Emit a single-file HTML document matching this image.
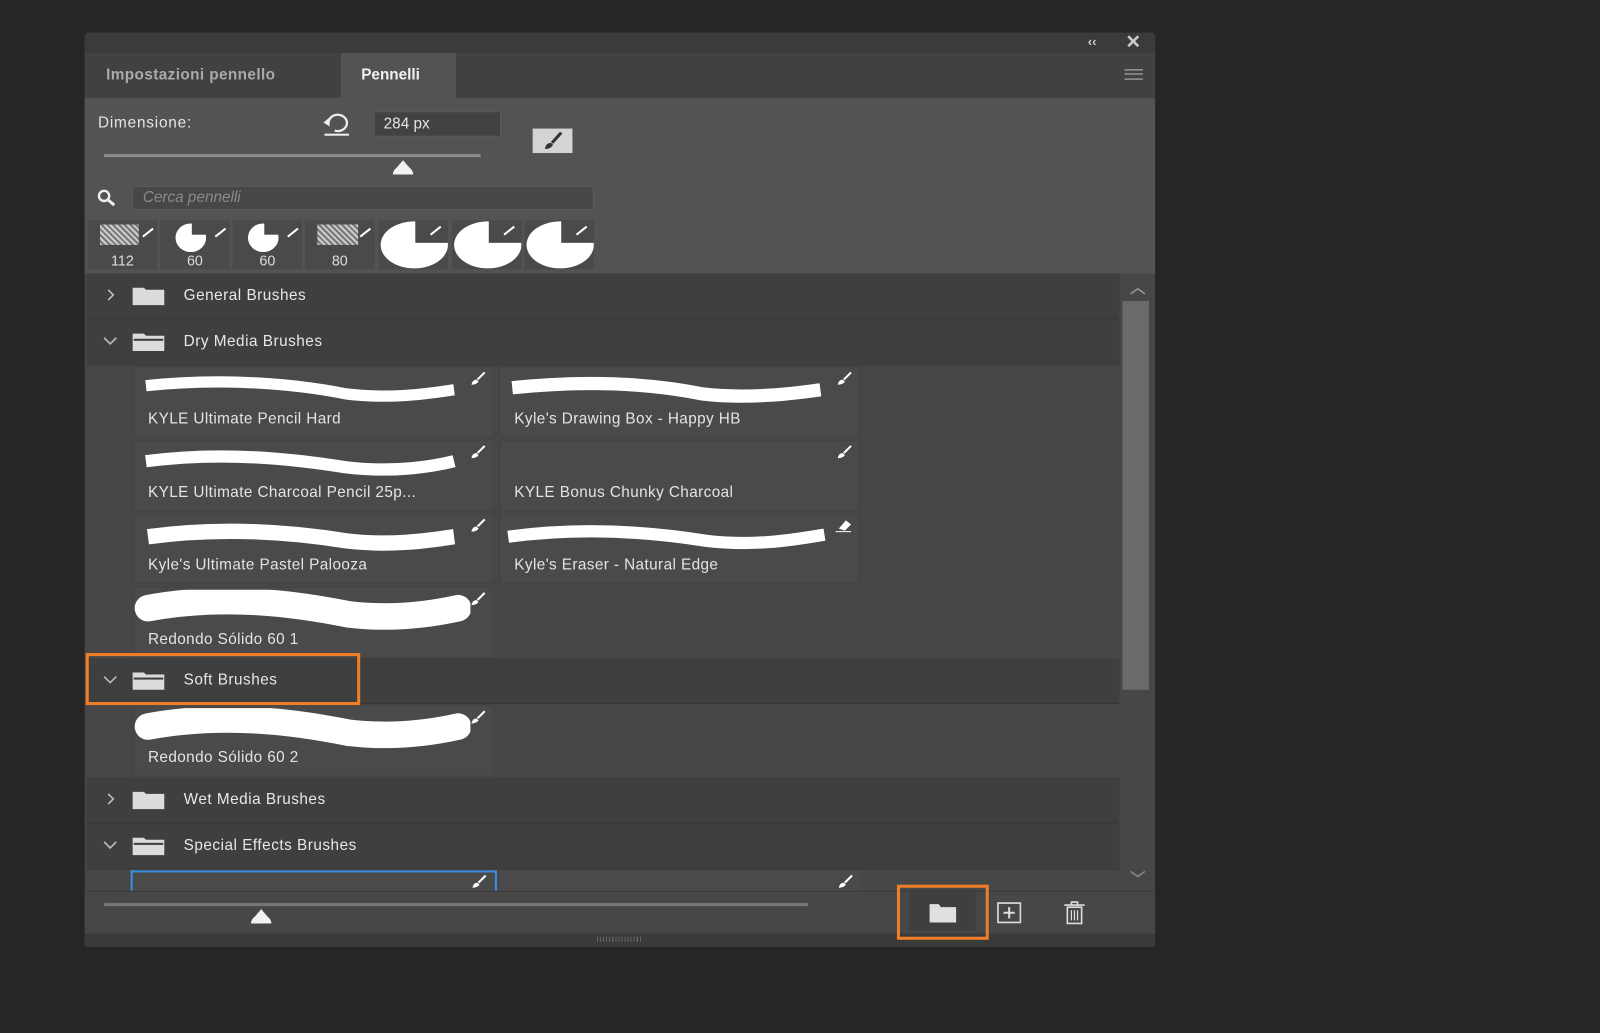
<!DOCTYPE html>
<html><head><meta charset="utf-8"><style>
html,body{margin:0;padding:0;background:#262626;width:1600px;height:1033px;overflow:hidden}
#w{position:absolute;left:0;top:0;width:1568px;height:1012px;transform:scale(1.0204);transform-origin:0 0;font-family:"Liberation Sans",sans-serif;color:#e6e6e6}
.a{position:absolute}
.row{position:absolute;left:85px;width:1012px;height:44px;background:#3f3f3f;border-bottom:1px solid #383838}
.row .t{position:absolute;left:95px;top:13px;font-size:15px;color:#e8e8e8;letter-spacing:.5px}
.row .ch{position:absolute;left:16px;top:14px;width:14px;height:14px}
.row .fd{position:absolute;left:44px;top:12px}
.card{position:absolute;width:354px;background:#4a4a4a;border:1px solid #434343;box-sizing:border-box}
.card .l{position:absolute;left:14px;bottom:9px;font-size:15px;color:#e4e4e4;letter-spacing:.4px;white-space:nowrap}
.card svg.s{position:absolute;left:8px;top:6px}
.card .b{position:absolute;right:6px;top:4px}
.tile{position:absolute;top:216px;width:68px;height:48px;background:#4a4a4a;overflow:hidden}
.tile span{position:absolute;bottom:1px;width:100%;text-align:center;font-size:14px;color:#ddd}
.tile i{position:absolute;background:#4a4a4a}
</style></head><body><div id="w">
<div class="a" style="left:83px;top:32px;width:1049px;height:896px;background:#474747;border-radius:4px 4px 0 0;overflow:hidden">
</div>
<div class="a" style="left:83px;top:32px;width:1049px;height:20px;background:#3b3b3b;border-radius:4px 4px 0 0"></div>
<div class="a" style="left:1066px;top:33px;font-size:13px;color:#ccc;font-weight:bold">‹‹</div>
<div class="a" style="left:1103px;top:31px;font-size:18px;color:#ccc;font-weight:bold">✕</div>
<div class="a" style="left:83px;top:52px;width:1049px;height:44px;background:#414141"></div>
<div class="a" style="left:104px;top:65px;font-size:15px;font-weight:bold;color:#aaa;letter-spacing:.4px">Impostazioni pennello</div>
<div class="a" style="left:334px;top:52px;width:113px;height:44px;background:#535353"></div>
<div class="a" style="left:354px;top:65px;font-size:15px;font-weight:bold;color:#f0f0f0">Pennelli</div>
<div class="a" style="left:1102px;top:68px;width:18px;height:8px;border-top:1px solid #bbb;border-bottom:1px solid #bbb"></div>
<div class="a" style="left:1102px;top:72px;width:18px;height:1px;background:#bbb"></div>
<div class="a" style="left:83px;top:96px;width:1049px;height:172px;background:#535353"></div>
<div class="a" style="left:96px;top:112px;font-size:15px;color:#e6e6e6;letter-spacing:.8px">Dimensione:</div>
<svg class="a" style="left:314px;top:110px" width="32" height="24" viewBox="0 0 32 24"><path d="M8 10 A9 8 0 1 1 14 18" fill="none" stroke="#eee" stroke-width="2.2"/><path d="M3 10 L9 5 L9 14Z" fill="#eee"/><rect x="4" y="21" width="24" height="2" fill="#eee"/></svg>
<div class="a" style="left:366px;top:109px;width:125px;height:25px;background:#424242;border:1px solid #5c5c5c;box-sizing:border-box"></div>
<div class="a" style="left:376px;top:113px;font-size:15px;color:#e6e6e6">284 px</div>
<div class="a" style="left:522px;top:126px;width:39px;height:24px;background:#d4d4d4"></div>
<svg class="a" style="left:530px;top:128px" width="24" height="20" viewBox="0 0 24 20"><path d="M20 2 L11 12" stroke="#333" stroke-width="3"/><path d="M4 18 Q5 12 10 12 L12 14 Q10 18 4 18Z" fill="#333"/></svg>
<div class="a" style="left:102px;top:151px;width:369px;height:3px;background:#8a8a8a"></div>
<svg class="a" style="left:384px;top:156px" width="22" height="16"><path d="M1 15 Q1 11 5 8 L11 1 L17 8 Q21 11 21 15Z" fill="#f2f2f2"/></svg>
<svg class="a" style="left:94px;top:185px" width="22" height="18"><circle cx="8" cy="7" r="5" fill="none" stroke="#eee" stroke-width="2.4"/><path d="M12 11 L18 16" stroke="#eee" stroke-width="3"/></svg>
<div class="a" style="left:129px;top:182px;width:453px;height:24px;background:#474747;border:1px solid #5e5e5e;box-sizing:border-box"></div>
<div class="a" style="left:140px;top:185px;font-size:15px;font-style:italic;color:#8a8a8a">Cerca pennelli</div>
<div class="tile" style="left:86px"><div class="a" style="left:12px;top:4px;width:38px;height:20px;background:repeating-linear-gradient(45deg,#ccc 0 2px,#777 2px 4px)"></div><span>112</span></div>
<div class="tile" style="left:157px"><div class="a" style="left:15px;top:3px;width:30px;height:28px;border-radius:50%;background:#fff"></div><i style="left:31px;top:0;width:20px;height:14px"></i><span>60</span></div>
<div class="tile" style="left:228px"><div class="a" style="left:15px;top:3px;width:30px;height:28px;border-radius:50%;background:#fff"></div><i style="left:31px;top:0;width:20px;height:14px"></i><span>60</span></div>
<div class="tile" style="left:299px"><div class="a" style="left:12px;top:4px;width:40px;height:20px;background:repeating-linear-gradient(45deg,#ccc 0 2px,#777 2px 4px)"></div><span>80</span></div>
<div class="tile" style="left:371px"><div class="a" style="left:2px;top:1px;width:66px;height:46px;border-radius:50%;background:#fff"></div><i style="left:36px;top:0;width:32px;height:22px"></i></div>
<div class="tile" style="left:443px"><div class="a" style="left:2px;top:1px;width:66px;height:46px;border-radius:50%;background:#fff"></div><i style="left:36px;top:0;width:32px;height:22px"></i></div>
<div class="tile" style="left:514px"><div class="a" style="left:2px;top:1px;width:66px;height:46px;border-radius:50%;background:#fff"></div><i style="left:36px;top:0;width:32px;height:22px"></i></div>
<svg class="a" style="left:86px;top:216px" width="500" height="48"><g stroke="#fff" stroke-width="2"><path d="M54 16 L64 8"/><path d="M125 16 L135 8"/><path d="M196 16 L206 8"/><path d="M267 16 L277 8"/><path d="M336 14 L346 6"/><path d="M408 14 L418 6"/><path d="M479 14 L489 6"/></g></svg>
<div class="a" style="left:85px;top:268px;width:1012px;height:605px;background:#474747"></div>
<div class="a" style="left:1097px;top:268px;width:33px;height:605px;background:#474747"></div>
<div class="a" style="left:1100px;top:295px;width:26px;height:381px;background:#6a6a6a"></div>
<svg class="a" style="left:1106px;top:280px" width="18" height="10"><path d="M2 8 L9 3 L16 8" fill="none" stroke="#999" stroke-width="1.5"/></svg>
<svg class="a" style="left:1106px;top:852px" width="18" height="10"><path d="M2 2 L9 7 L16 2" fill="none" stroke="#888" stroke-width="1.5"/></svg>

<div class="row" style="top:268px"><svg class="ch" viewBox="0 0 14 14"><path d="M5 2 L10 7 L5 12" fill="none" stroke="#bbb" stroke-width="1.6"/></svg><svg class="fd" width="34" height="20"><path d="M1 2 H12 L14 4 H32 V19 H1Z" fill="#dcdcdc"/></svg><div class="t">General Brushes</div></div>
<div class="row" style="top:313px"><svg class="ch" viewBox="0 0 14 14"><path d="M1 4 L7 10 L13 4" fill="none" stroke="#bbb" stroke-width="1.6"/></svg><svg class="fd" width="34" height="20"><path d="M1 2 H12 L14 4 H32 V19 H1Z" fill="#dcdcdc"/><rect x="2" y="7" width="29" height="2" fill="#3f3f3f"/></svg><div class="t">Dry Media Brushes</div></div>

<div class="card" style="left:130px;top:359px;height:70px"><svg class="s" width="310" height="30"><path d="M4 12 C80 4 150 10 200 20 C250 26 290 18 306 16" fill="none" stroke="#fff" stroke-width="11"/></svg><svg class="b" width="16" height="14"><path d="M14 1 L7 8" stroke="#fff" stroke-width="2"/><path d="M1 13 Q2 8 6 8 L8 10 Q6 13 1 13Z" fill="#fff"/></svg><div class="l">KYLE Ultimate Pencil Hard</div></div>
<div class="card" style="left:489px;top:359px;height:70px"><svg class="s" width="310" height="30"><path d="M4 14 C80 6 140 10 190 20 C240 26 290 18 306 16" fill="none" stroke="#fff" stroke-width="13"/></svg><svg class="b" width="16" height="14"><path d="M14 1 L7 8" stroke="#fff" stroke-width="2"/><path d="M1 13 Q2 8 6 8 L8 10 Q6 13 1 13Z" fill="#fff"/></svg><div class="l">Kyle's Drawing Box - Happy HB</div></div>
<div class="card" style="left:130px;top:431px;height:70px"><svg class="s" width="310" height="30"><path d="M4 14 C80 4 150 12 200 20 C250 26 290 18 306 14" fill="none" stroke="#fff" stroke-width="12"/></svg><svg class="b" width="16" height="14"><path d="M14 1 L7 8" stroke="#fff" stroke-width="2"/><path d="M1 13 Q2 8 6 8 L8 10 Q6 13 1 13Z" fill="#fff"/></svg><div class="l">KYLE Ultimate Charcoal Pencil 25p...</div></div>
<div class="card" style="left:489px;top:431px;height:70px"><svg class="b" width="16" height="14"><path d="M14 1 L7 8" stroke="#fff" stroke-width="2"/><path d="M1 13 Q2 8 6 8 L8 10 Q6 13 1 13Z" fill="#fff"/></svg><div class="l">KYLE Bonus Chunky Charcoal</div></div>
<div class="card" style="left:130px;top:503px;height:69px"><svg class="s" width="310" height="30"><path d="M6 16 C80 6 150 12 200 20 C250 26 290 18 306 16" fill="none" stroke="#fff" stroke-width="15"/></svg><svg class="b" width="16" height="14"><path d="M14 1 L7 8" stroke="#fff" stroke-width="2"/><path d="M1 13 Q2 8 6 8 L8 10 Q6 13 1 13Z" fill="#fff"/></svg><div class="l">Kyle's Ultimate Pastel Palooza</div></div>
<div class="card" style="left:489px;top:503px;height:69px"><svg class="s" width="320" height="30" style="left:2px"><path d="M6 16 C80 6 150 12 200 20 C250 26 290 18 316 14" fill="none" stroke="#fff" stroke-width="12"/></svg><svg class="b" width="18" height="14"><path d="M4 10 L11 2 L16 6 L10 12Z" fill="#fff"/><path d="M1 13 H16" stroke="#fff"/></svg><div class="l">Kyle's Eraser - Natural Edge</div></div>
<div class="card" style="left:130px;top:575px;height:70px"><svg class="s" width="330" height="40" style="left:0;top:2px"><path d="M14 18 C90 4 160 14 210 24 C260 30 300 22 318 18" fill="none" stroke="#fff" stroke-width="26" stroke-linecap="round"/></svg><svg class="b" width="16" height="14"><path d="M14 1 L7 8" stroke="#fff" stroke-width="2"/><path d="M1 13 Q2 8 6 8 L8 10 Q6 13 1 13Z" fill="#fff"/></svg><div class="l">Redondo Sólido 60 1</div></div>

<div class="row" style="top:645px"><svg class="ch" viewBox="0 0 14 14"><path d="M1 4 L7 10 L13 4" fill="none" stroke="#bbb" stroke-width="1.6"/></svg><svg class="fd" width="34" height="20"><path d="M1 2 H12 L14 4 H32 V19 H1Z" fill="#dcdcdc"/><rect x="2" y="7" width="29" height="2" fill="#3f3f3f"/></svg><div class="t">Soft Brushes</div></div>
<div class="card" style="left:130px;top:691px;height:70px"><svg class="s" width="330" height="40" style="left:0;top:2px"><path d="M14 18 C90 4 160 14 210 24 C260 30 300 22 318 18" fill="none" stroke="#fff" stroke-width="26" stroke-linecap="round"/></svg><svg class="b" width="16" height="14"><path d="M14 1 L7 8" stroke="#fff" stroke-width="2"/><path d="M1 13 Q2 8 6 8 L8 10 Q6 13 1 13Z" fill="#fff"/></svg><div class="l">Redondo Sólido 60 2</div></div>
<div class="row" style="top:762px"><svg class="ch" viewBox="0 0 14 14"><path d="M5 2 L10 7 L5 12" fill="none" stroke="#bbb" stroke-width="1.6"/></svg><svg class="fd" width="34" height="20"><path d="M1 2 H12 L14 4 H32 V19 H1Z" fill="#dcdcdc"/></svg><div class="t">Wet Media Brushes</div></div>
<div class="row" style="top:807px"><svg class="ch" viewBox="0 0 14 14"><path d="M1 4 L7 10 L13 4" fill="none" stroke="#bbb" stroke-width="1.6"/></svg><svg class="fd" width="34" height="20"><path d="M1 2 H12 L14 4 H32 V19 H1Z" fill="#dcdcdc"/><rect x="2" y="7" width="29" height="2" fill="#3f3f3f"/></svg><div class="t">Special Effects Brushes</div></div>
<div class="a" style="left:128px;top:853px;width:359px;height:20px;border:2px solid #3a8ee6;border-bottom:none;box-sizing:border-box;background:#4a4a4a"></div>
<div class="a" style="left:489px;top:853px;width:354px;height:20px;background:#4a4a4a"></div>
<svg class="a" style="left:462px;top:857px" width="16" height="14"><path d="M14 1 L7 8" stroke="#fff" stroke-width="2"/><path d="M1 13 Q2 8 6 8 L8 10 Q6 13 1 13Z" fill="#fff"/></svg>
<svg class="a" style="left:821px;top:857px" width="16" height="14"><path d="M14 1 L7 8" stroke="#fff" stroke-width="2"/><path d="M1 13 Q2 8 6 8 L8 10 Q6 13 1 13Z" fill="#fff"/></svg>

<div class="a" style="left:83px;top:873px;width:1049px;height:42px;background:#474747;border-top:1px solid #3a3a3a"></div>
<div class="a" style="left:102px;top:885px;width:690px;height:3px;background:#777"></div>
<svg class="a" style="left:245px;top:890px" width="22" height="16"><path d="M1 15 Q1 11 5 8 L11 1 L17 8 Q21 11 21 15Z" fill="#f2f2f2"/></svg>
<div class="a" style="left:892px;top:872px;width:64px;height:40px;background:#3f3f3f"></div>
<svg class="a" style="left:910px;top:885px" width="28" height="20"><path d="M1 1 H10 L12 4 H27 V19 H1Z" fill="#e0e0e0"/></svg>
<svg class="a" style="left:977px;top:884px" width="24" height="22"><rect x="1" y="1" width="22" height="19" fill="none" stroke="#ddd" stroke-width="1.6"/><path d="M12 5 V16 M6.5 10.5 H17.5" stroke="#ddd" stroke-width="2"/></svg>
<svg class="a" style="left:1042px;top:883px" width="22" height="24"><path d="M1 4 H21 M8 4 V1 H14 V4" stroke="#ddd" stroke-width="1.6" fill="none"/><path d="M4 6 H18 V22 H4Z" fill="none" stroke="#ddd" stroke-width="1.6"/><path d="M8 9 V19 M11 9 V19 M14 9 V19" stroke="#ddd" stroke-width="1.2"/></svg>
<div class="a" style="left:83px;top:915px;width:1049px;height:13px;background:#3a3a3a"></div>
<div class="a" style="left:585px;top:918px;width:44px;height:5px;background:repeating-linear-gradient(90deg,#666 0 1px,transparent 1px 3px)"></div>
<div class="a" style="left:879px;top:867px;width:90px;height:54px;border:3px solid #f07e26;box-sizing:border-box"></div>
<div class="a" style="left:84px;top:640px;width:269px;height:51px;border:3px solid #f07e26;box-sizing:border-box"></div>
</div></body></html>
